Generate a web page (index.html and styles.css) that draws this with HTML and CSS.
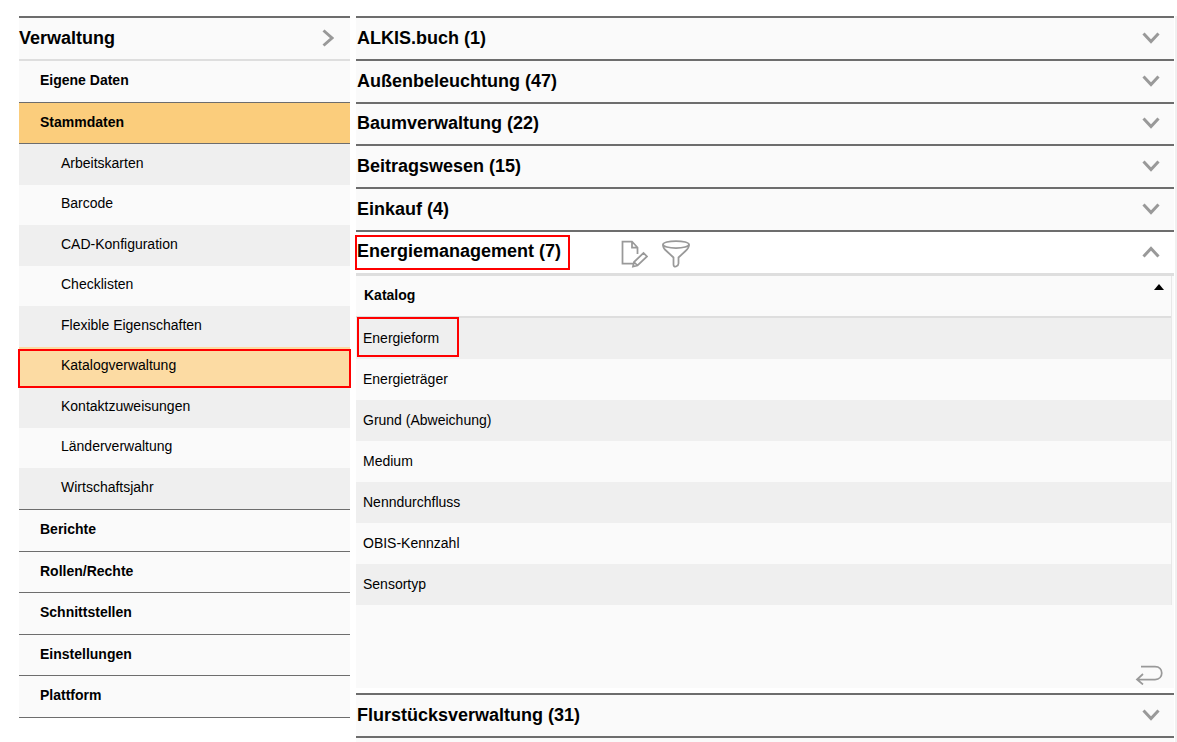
FILE: index.html
```html
<!DOCTYPE html>
<html lang="de">
<head>
<meta charset="utf-8">
<title>Katalogverwaltung</title>
<link rel="stylesheet" href="styles.css">
</head>
<body>
<svg class="symbols" aria-hidden="true">
  <symbol id="down" viewBox="0 0 18 12"><path d="M1.500 1.500 9 9.500 16.500 1.500"/></symbol>
</svg>
<div class="page">
  <nav class="sidebar" aria-label="Verwaltung">
    <button class="bar sidebar-head" type="button">Verwaltung
      <svg class="chevron-right" viewBox="0 0 12 18"><path d="M1.500 1.500 10 9 1.500 16.500"/></svg>
    </button>
    <ul class="sections">
      <li><a class="section" href="#">Eigene Daten</a></li>
      <li><a class="section active" href="#">Stammdaten</a></li>
    </ul>
    <ul class="entries">
      <li><a class="entry" href="#">Arbeitskarten</a></li>
      <li><a class="entry" href="#">Barcode</a></li>
      <li><a class="entry" href="#">CAD-Konfiguration</a></li>
      <li><a class="entry" href="#">Checklisten</a></li>
      <li><a class="entry" href="#">Flexible Eigenschaften</a></li>
      <li><a class="entry current" href="#">Katalogverwaltung<span class="mark mark-entry"></span></a></li>
      <li><a class="entry" href="#">Kontaktzuweisungen</a></li>
      <li><a class="entry" href="#">Länderverwaltung</a></li>
      <li><a class="entry" href="#">Wirtschaftsjahr</a></li>
    </ul>
    <ul class="sections">
      <li><a class="section" href="#">Berichte</a></li>
      <li><a class="section" href="#">Rollen/Rechte</a></li>
      <li><a class="section" href="#">Schnittstellen</a></li>
      <li><a class="section" href="#">Einstellungen</a></li>
      <li><a class="section" href="#">Plattform</a></li>
    </ul>
  </nav>
  <main class="content">
    <button class="bar" type="button">ALKIS.buch (1)<svg class="chevron"><use href="#down"/></svg></button>
    <button class="bar" type="button">Außenbeleuchtung (47)<svg class="chevron"><use href="#down"/></svg></button>
    <button class="bar short" type="button">Baumverwaltung (22)<svg class="chevron"><use href="#down"/></svg></button>
    <button class="bar" type="button">Beitragswesen (15)<svg class="chevron"><use href="#down"/></svg></button>
    <button class="bar" type="button">Einkauf (4)<svg class="chevron"><use href="#down"/></svg></button>
    <section class="group">
      <div class="bar open">
        <button class="title" type="button">Energiemanagement (7)<span class="mark mark-title"></span></button>
        <div class="tools">
          <button class="tool" type="button" aria-label="Bearbeiten">
            <svg viewBox="0 0 28 28"><path d="M13.500 23.500H2.500V1.500H12L17.500 7.500V14M12 1.500V7.500H17.500M13 26.500 14 22 23.500 13 27 16.500 17.500 25.500ZM14 22 17.500 25.500"/></svg>
          </button>
          <button class="tool" type="button" aria-label="Filtern">
            <svg viewBox="0 0 28 28"><ellipse cx="14" cy="4.500" rx="13" ry="3.500"/><path d="M1 4.500C1 8 2.500 9.500 4.500 11L11.500 17.500V24.500Q11.500 27 14 26.500 16.500 25.500 16.500 23.500V17.500L23.500 11C26 9 27 8 27 4.500"/></svg>
          </button>
        </div>
        <button class="toggle" type="button" aria-label="Einklappen"><svg class="chevron up"><use href="#down"/></svg></button>
      </div>
      <div class="panel">
        <table class="catalog">
          <thead>
            <tr><th><div class="th">Katalog<svg class="sort" viewBox="0 0 10 6"><path d="M0 6 5 0 10 6Z"/></svg></div></th></tr>
          </thead>
          <tbody>
            <tr><td>Energieform<span class="mark mark-cell"></span></td></tr>
            <tr><td>Energieträger</td></tr>
            <tr><td>Grund (Abweichung)</td></tr>
            <tr><td>Medium</td></tr>
            <tr><td>Nenndurchfluss</td></tr>
            <tr><td>OBIS-Kennzahl</td></tr>
            <tr><td>Sensortyp</td></tr>
          </tbody>
        </table>
        <div class="panel-foot">
          <button class="back" type="button" aria-label="Zurück">
            <svg viewBox="0 0 28 20"><path d="M6 1.500H20C29 1.500 29 14.500 20 14.500H2M8 9 2 14.500 8 19.500"/></svg>
          </button>
        </div>
      </div>
    </section>
    <button class="bar" type="button">Flurstücksverwaltung (31)<svg class="chevron"><use href="#down"/></svg></button>
    <div class="next"></div>
  </main>
</div>
</body>
</html>
```
FILE: styles.css
```css
* { box-sizing: border-box; }

body {
  margin: 0;
  background: #fff;
  color: #000;
  font: 14px/16px "Liberation Sans", Arial, sans-serif;
}

ul { margin: 0; padding: 0; list-style: none; }
a { color: inherit; text-decoration: none; }
button {
  padding: 0;
  border: 0;
  background: none;
  color: inherit;
  font: inherit;
  text-align: left;
  cursor: pointer;
}
svg { display: block; fill: none; stroke: #999; stroke-width: 1.75; }
.symbols { position: absolute; width: 0; height: 0; }

.page {
  display: grid;
  grid-template-columns: 331fr 818fr;
  gap: 6px;
  min-height: calc(100vh - 16px);
  margin-top: 16px;
  padding: 0 1px 0 19px;
  border-right: 2px solid #f0f0f0;
}

.bar {
  display: flex;
  align-items: center;
  justify-content: space-between;
  width: 100%;
  height: 43px;
  padding: 0 14px 2px 1px;
  border-top: 2px solid #6d6d6d;
  background: #fafafa;
  font-size: 18px;
  font-weight: bold;
  line-height: 20px;
}
.bar.short { height: 42px; }

.chevron { width: 18px; height: 12px; stroke-width: 3; }
.chevron.up { transform: rotate(180deg); }
.chevron-right { width: 12px; height: 18px; stroke-width: 3; }

.sidebar-head {
  height: 45px;
  padding: 0 16px 2px 0;
  border-bottom: 2px solid #dedede;
}

.section {
  display: flex;
  align-items: center;
  height: 42px;
  padding: 0 21px 3px;
  border-bottom: 1px solid #6d6d6d;
  background: #fafafa;
  font-weight: bold;
}
.sections li:nth-child(even) .section { height: 41px; }
.section.active { background: #fbcd7c; }

.entry {
  position: relative;
  display: flex;
  align-items: center;
  height: 40px;
  padding: 0 42px 4px;
  background: #fafafa;
}
.entries li:nth-child(odd) .entry { height: 41px; background: #efefef; }
.entry.current { z-index: 1; background: #fcdba3; }
.entries { border-bottom: 1px solid #6d6d6d; }

.content { display: flex; flex-direction: column; min-width: 0; }

.bar.open {
  height: 46px;
  border-bottom: 3px solid #dedede;
  background: #fff;
}
.title { position: relative; padding-bottom: 1px; }
.tools { display: flex; gap: 14px; flex: 1; margin-left: 59px; padding-top: 4px; }
.tool svg { width: 28px; height: 28px; }

.panel { margin-bottom: 5px; background: #fafafa; }
.catalog {
  width: calc(100% - 2px);
  border-spacing: 0;
  border-right: 1px solid #e8e8e8;
}
.catalog th { padding: 0; border-bottom: 2px solid #dedede; text-align: left; }
.th {
  display: flex;
  align-items: center;
  justify-content: space-between;
  height: 40px;
  padding: 0 7px 2px 8px;
}
.sort { align-self: flex-start; width: 10px; height: 6px; margin-top: 8px; fill: #000; stroke: none; }
.catalog td { position: relative; height: 41px; padding: 0 7px 2px; }
.catalog tbody tr:nth-child(odd) { background: #efefef; }

.panel-foot {
  display: flex;
  align-items: flex-end;
  justify-content: flex-end;
  height: 83px;
  padding: 0 11px 3px 0;
}
.back svg { width: 28px; height: 20px; }

.next { flex: 1; border-top: 2px solid #6d6d6d; background: #fafafa; }

.mark { position: absolute; border: 2px solid #f00; pointer-events: none; }
.mark-entry { inset: 2px -1px -1px; }
.mark-title { inset: -6px -9px -8px -2px; }
.mark-cell { top: -1px; bottom: 2px; left: 1px; width: 102px; }
```
